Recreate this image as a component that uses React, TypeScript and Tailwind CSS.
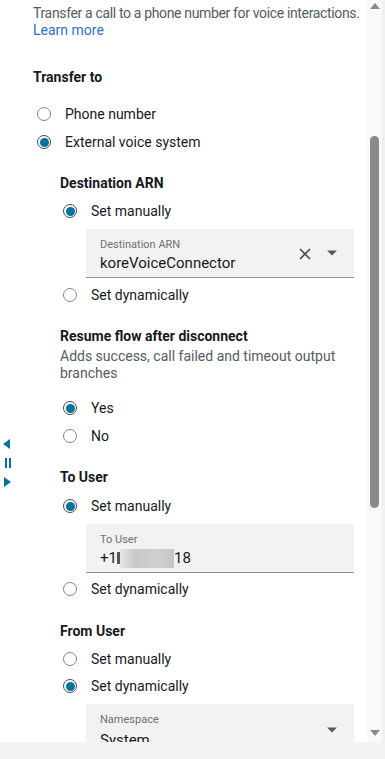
import React from "react";

function Radio({ checked }: { checked?: boolean }) {
  return checked ? (
    <span className="w-[14px] h-[14px] rounded-full border-[1.5px] border-[#414750] flex items-center justify-center shrink-0 bg-white">
      <span className="w-[9px] h-[9px] rounded-full bg-[#00739e]" />
    </span>
  ) : (
    <span className="w-[14px] h-[14px] rounded-full border-[1.5px] border-[#7d8690] shrink-0 bg-white" />
  );
}

function RadioRow({ label, checked, nested }: { label: string; checked?: boolean; nested?: boolean }) {
  return (
    <div className={`flex items-center h-[28px] gap-[14px] ${nested ? "pl-[3px]" : "pl-[4px]"}`}>
      <Radio checked={checked} />
      <span className="text-[14px] text-[#16191f]">{label}</span>
    </div>
  );
}

function Heading({ children, className = "" }: { children: React.ReactNode; className?: string }) {
  return <div className={`h-[20px] leading-[20px] text-[14px] font-bold text-[#16191f] ${className}`}>{children}</div>;
}

function Caret() {
  return (
    <svg width="12" height="8" viewBox="0 0 12 8">
      <path d="M1 1.5h10L6 6.5z" fill="#545b64" />
    </svg>
  );
}

export default function App() {
  return (
    <div className="w-[385px] h-[759px] bg-white overflow-hidden relative flex flex-col" style={{ fontFamily: "Roboto, 'Open Sans', sans-serif" }}>
      <div className="flex flex-1 min-h-0">
        <div className="flex-1 min-w-0 pl-[33px] pt-[5px]">
          <div className="text-[14px] leading-[17px] text-[#545b64]">
            <div className="whitespace-nowrap tracking-[-0.35px]">Transfer a call to a phone number for voice interactions.</div>
            <div className="text-[#2f6fc7]">Learn more</div>
          </div>
          <Heading className="mt-[28px]">Transfer to</Heading>
          <div className="mt-[13px]">
            <RadioRow label="Phone number" />
            <RadioRow label="External voice system" checked />
          </div>
          <div className="pl-[27px]">
            <Heading className="mt-[17px]">Destination ARN</Heading>
            <div className="mt-[4px]">
              <RadioRow label="Set manually" checked nested />
            </div>
            <div className="ml-[26px] w-[268px] h-[49px] mt-[4px] bg-[#f2f2f2] border-b border-[#8d9196] pl-[14px] pr-[16px] flex items-center">
              <div className="flex-1 pt-[5px]">
                <div className="text-[11px] leading-[14px] text-[#6b7078]">Destination ARN</div>
                <div className="text-[15px] leading-[20px] text-[#16191f] mt-[1px]">koreVoiceConnector</div>
              </div>
              <svg width="14" height="14" viewBox="0 0 14 14" className="mr-[14px] mt-[2px]">
                <path d="M2 2l10 10M12 2L2 12" stroke="#414750" strokeWidth="1.6" />
              </svg>
              <Caret />
            </div>
            <div className="mt-[3px]">
              <RadioRow label="Set dynamically" nested />
            </div>
            <Heading className="mt-[17px]">Resume flow after disconnect</Heading>
            <div className="mt-[2px] text-[14px] leading-[17px] text-[#545b64] pr-[10px]">
              Adds success, call failed and timeout output branches
            </div>
            <div className="mt-[12px]">
              <RadioRow label="Yes" checked nested />
              <RadioRow label="No" nested />
            </div>
            <Heading className="mt-[17px]">To User</Heading>
            <div className="mt-[5px]">
              <RadioRow label="Set manually" checked nested />
            </div>
            <div className="ml-[26px] w-[268px] h-[49px] mt-[4px] bg-[#f2f2f2] border-b border-[#8d9196] pl-[14px] flex items-center">
              <div className="pt-[5px]">
                <div className="text-[11px] leading-[14px] text-[#6b7078]">To User</div>
                <div className="text-[15px] leading-[20px] text-[#16191f] mt-[1px] flex items-center">
                  <span>+1</span>
                  <span className="inline-block w-[3px] h-[12px] bg-[#555]" />
                  <span className="inline-block w-[54px] h-[19px] bg-[linear-gradient(90deg,#e6e6e6,#c8c8c8_30%,#d0d0d0_70%,#c4c4c4)]" />
                  <span>18</span>
                </div>
              </div>
            </div>
            <div className="mt-[2px]">
              <RadioRow label="Set dynamically" nested />
            </div>
            <Heading className="mt-[18px]">From User</Heading>
            <div className="mt-[4px]">
              <RadioRow label="Set manually" nested />
              <div className="-mt-[1px]">
                <RadioRow label="Set dynamically" checked nested />
              </div>
            </div>
            <div className="ml-[26px] w-[268px] h-[48px] mt-[4px] bg-[#f2f2f2] pl-[14px] pr-[16px] flex">
              <div className="flex-1 pt-[9px]">
                <div className="text-[11px] leading-[14px] text-[#6b7078]">Namespace</div>
                <div className="text-[15px] leading-[20px] text-[#16191f] mt-[3px]">System</div>
              </div>
              <div className="pt-[22px]">
                <Caret />
              </div>
            </div>
          </div>
        </div>
        <div className="w-[15px] bg-[#f9f9f9] flex flex-col items-center shrink-0">
          <svg width="10" height="6" viewBox="0 0 10 6" className="mt-[3px]">
            <path d="M5 0L10 6H0z" fill="#8a8a8a" />
          </svg>
          <div className="mt-[127px] w-[9px] h-[372px] rounded-[5px] bg-[#8a8a8a]" />
          <div className="flex-1" />
          <svg width="10" height="6" viewBox="0 0 10 6" className="mb-[6px]">
            <path d="M0 0H10L5 6z" fill="#8a8a8a" />
          </svg>
        </div>
        <div className="w-[3px] bg-[#f0f0f0] shrink-0" />
      </div>
      <div className="h-[17px] bg-[#f3f3f3] shrink-0" />
      <div className="absolute left-[3px] top-[439px] flex flex-col items-start gap-[9px]">
        <svg width="8" height="10" viewBox="0 0 8 10"><path d="M7 0v10L0 5z" fill="#00739e" /></svg>
        <svg width="8" height="10" viewBox="0 0 8 10"><path d="M2 0h2v10H2zM6 0h2v10H6z" fill="#00739e" /></svg>
        <svg width="8" height="10" viewBox="0 0 8 10"><path d="M1 0v10L8 5z" fill="#00739e" /></svg>
      </div>
    </div>
  );
}
